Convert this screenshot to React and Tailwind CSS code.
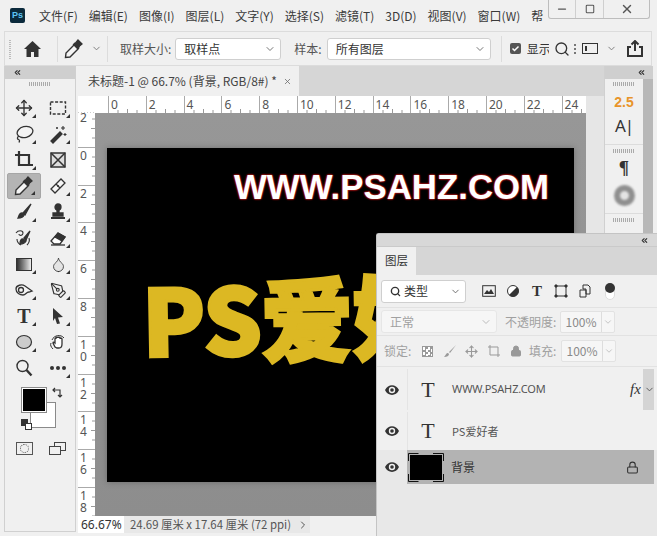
import React from 'react';
import { ChevronDown, ChevronsLeft, ChevronRight, Search, Move, Droplet, PenTool, Minus, Square, X, Lock } from 'lucide-react';

const cjk = "font-['Noto_Sans_CJK_SC','Noto_Sans',sans-serif]";

const menus = ['文件(F)', '编辑(E)', '图像(I)', '图层(L)', '文字(Y)', '选择(S)', '滤镜(T)', '3D(D)', '视图(V)', '窗口(W)'];
const rulerX = ['0', '2', '4', '6', '8', '10', '12', '14', '16', '18', '20', '22', '24'];
const rulerY = ['2', '0', '2', '4', '6', '8', '10', '12', '14', '16', '18'];

// small corner triangle on grouped tools
const Corner = () => (
  <span className="absolute right-[5px] bottom-[3px] w-0 h-0 border-l-[4px] border-l-transparent border-b-[4px] border-b-[#333]" />
);

const Svg = ({ children, s = 20 }) => (
  <svg width={s} height={s} viewBox="0 0 20 20" fill="none" stroke="#333" strokeWidth="1.3">{children}</svg>
);

const PipetteIcon = ({ s = 20 }) => (
  <Svg s={s}>
    <path d="M10.500 5.500l4 4-8.500 8.500-4.500 .5 .5-4.500z" fill="#f4f4f4" strokeWidth="1.400" />
    <path d="M9.500 5.500l1.500-1.500 1-.5 2-2.500 4 4-2.500 2-.5 1-1.500 1.500z" fill="#333" />
  </Svg>
);

const tools = [
  [<Move size={18} color="#333" strokeWidth={1.8} />, true],
  [<Svg><rect x="2.500" y="4" width="15" height="12" strokeDasharray="3 1.600" strokeWidth="1.400" /></Svg>, true],
  [<Svg><ellipse cx="11" cy="8" rx="8" ry="5.500" transform="rotate(-15 11 8)" fill="#f4f4f4" /><path d="M5 12c-2 1-2 3-.5 3.500s1 2 .5 3" /></Svg>, true],
  [<Svg><path d="M3 17l9-9 2 2-9 9z" fill="#333" /><path d="M15 2v4M13 4h4M17 9v3M15.500 10.500h3M9 3v2M8 4h2" strokeWidth="1.100" /></Svg>, true],
  [<Svg><path d="M1 5h14v11M5 1v14h14" strokeWidth="2.200" fill="none" /></Svg>, true],
  [<Svg><rect x="3" y="3" width="14" height="14" fill="#ddd" strokeWidth="1.500" /><path d="M3 3l14 14M17 3L3 17" strokeWidth="1.500" /></Svg>, false],
  [<PipetteIcon />, true],
  [<Svg><path d="M3 13L13 3l4 4L7 17z" fill="#f6f6f6" /><path d="M8 8l4 4" /><circle cx="10" cy="10" r="1" fill="#333" stroke="none" /></Svg>, true],
  [<Svg><path d="M17 2L9 11l2 2z" fill="#333" /><path d="M8 11c-3 0-3 3-4 5 2 0 5 0 6-3z" fill="#333" /></Svg>, true],
  [<Svg><circle cx="10" cy="5" r="3" fill="#333" /><path d="M9 7h2v4H9zM5 11h10v3H5z" fill="#333" /><path d="M3 16h14" strokeWidth="2" /></Svg>, true],
  [<Svg><path d="M2 5c2-3 7-3 7 0s-4 3-4 1M3 11c0 3 2 5 4 6M15 10c1 3 0 5-2 7" strokeWidth="1.100" /><path d="M16 3l-6 7 2 2z" fill="#333" /><path d="M9 11c-2 0-3 2-3 5 2 0 5-1 6-3z" fill="#333" /></Svg>, false],
  [<Svg><path d="M3 13l7-8 7 4-5 7H6z" fill="#fff" /><path d="M10 5l7 4-3 4-7-4z" fill="#333" /><path d="M3 17h14" /></Svg>, true],
  [<span className="block w-[16px] h-[13px] border border-[#333] bg-gradient-to-r from-[#333] to-[#eee]" />, true],
  [<Droplet size={17} color="#333" strokeWidth={1.2} fill="#e4e4e4" />, true],
  [<Svg><path d="M2 9c0-4 6-5 9-3l7 5-3 1c-3 0-3 3-6 3s-7-2-7-6z" fill="#f4f4f4" /><circle cx="7" cy="10" r="2.500" /></Svg>, true],
  [<PenTool size={17} color="#333" strokeWidth={1.6} />, true],
  [<span className="font-['Liberation_Serif',serif] font-bold text-[20px] leading-none text-[#333]">T</span>, true],
  [<svg width="20" height="20" viewBox="0 0 20 20"><path d="M5 2l10 9-5 .5 2 6-3 .5-2-6-2 3z" fill="#333" /></svg>, true],
  [<Svg><ellipse cx="10" cy="10" rx="7.500" ry="6.500" fill="#ccc" strokeWidth="1.200" /></Svg>, true],
  [<Svg><path d="M4 8c2-5 9-6 12-2M5 17c-2-2-3-4-2-6" strokeWidth="1" /><path d="M7 15l-2-4c0-1 1-1 2 0V7c0-1 1-1 1 0V6c0-1 2-1 2 0 0-1 2-1 2 0v1c0-1 2-1 2 0v5c0 2-1 4-3 4H9z" fill="#fff" /></Svg>, true],
  [<Svg><circle cx="8.500" cy="8" r="5.500" strokeWidth="1.400" /><path d="M12.500 12l5 5.500" strokeWidth="2.400" /></Svg>, false],
  [<svg width="20" height="6" viewBox="0 0 20 6"><circle cx="4" cy="3" r="2" fill="#333" /><circle cx="10" cy="3" r="2" fill="#333" /><circle cx="16" cy="3" r="2" fill="#333" /></svg>, true],
];

const Handle = () => (
  <div className="h-[4px] w-[22px] mx-auto bg-[repeating-linear-gradient(90deg,#aaa_0,#aaa_1px,transparent_1px,transparent_2px)]" />
);

const Select = ({ label, className, muted }) => (
  <div className={`flex items-center justify-between pl-[8px] pr-[4px] rounded-[3px] border ${muted ? 'border-[#e6e6e6] bg-[#f6f6f6] text-[#a0a0a0]' : 'border-[#cfcfcf] bg-white text-[#333]'} ${className}`}>
    <span className="text-[12px]">{label}</span>
    <ChevronDown size={12} color={muted ? '#bbb' : '#777'} />
  </div>
);

const Percent = () => (
  <div className="flex h-[22px] w-[55px] rounded-[2px] border border-[#e2e2e2] bg-[#f6f6f6] text-[#8a8a8a]">
    <span className="w-[40px] text-center text-[12px] leading-[20px]">100%</span>
    <span className="flex-1 flex items-center justify-center border-l border-[#ddd]"><ChevronDown size={10} color="#bbb" /></span>
  </div>
);

const EyeCell = () => (
  <div className="w-[30px] flex items-center justify-center">
    <svg width="14" height="10" viewBox="0 0 14 10">
      <path d="M0 5c3-6.500 11-6.500 14 0-3 6.500-11 6.500-14 0z" fill="#333" />
      <circle cx="7" cy="5" r="3.200" fill="#f0f0f0" />
      <circle cx="7" cy="5" r="1.800" fill="#333" />
    </svg>
  </div>
);

const SerifT = () => (
  <span className="w-[40px] text-center font-['Liberation_Serif',serif] text-[22px] leading-none text-[#333]">T</span>
);

export default function App() {
  return (
    <div className={`relative w-[657px] h-[536px] overflow-hidden bg-[#f0f0f0] ${cjk} text-[#333]`}>
      {/* title / menu bar */}
      <div className="flex h-[31px] items-start">
        <div className="ml-[10px] mt-[8px] w-[15px] h-[15px] rounded-[2px] bg-[#0b2a3c] text-[#5cc4f5] text-[9px] font-bold leading-[15px] text-center font-['Liberation_Sans',sans-serif]">Ps</div>
        <div className="ml-[14px] mt-[7px] flex gap-[11px] text-[12px] leading-[18px] text-[#3a3a3a] whitespace-nowrap">
          {menus.map((m) => <span key={m}>{m}</span>)}
          <span>帮</span>
        </div>
        <div className="ml-auto mr-[7px] shrink-0 flex h-[19px] w-[102px] rounded-b-[3px] border border-t-0 border-[#bdbdbd]">
          <span className="w-[27px] flex items-center justify-center border-r border-[#cfcfcf]"><Minus size={12} color="#555" strokeWidth={2.500} /></span>
          <span className="w-[28px] flex items-center justify-center border-r border-[#cfcfcf]"><Square size={10} color="#555" strokeWidth={2.500} /></span>
          <span className="flex-1 flex items-center justify-center"><X size={14} color="#555" strokeWidth={2.500} /></span>
        </div>
      </div>

      {/* options bar */}
      <div className="ml-[4px] mr-[5px] h-[35px] flex items-center border border-[#dcdcdc] bg-[#f0f0f0]">
        <div className="ml-[4px] w-[2px] h-[20px] bg-[repeating-linear-gradient(0deg,#bbb_0,#bbb_1px,transparent_1px,transparent_2px)]" />
        <svg width="17" height="16" viewBox="0 0 17 16" className="ml-[13px]"><path d="M8.500 0L0 8h2.500v8h4.500v-5h3v5h4.500V8H17z" fill="#333" /></svg>
        <div className="ml-[16px] w-px h-[26px] bg-[#dcdcdc]" />
        <span className="ml-[6px]"><PipetteIcon s={20} /></span>
        <ChevronDown size={11} color="#777" className="ml-[7px]" />
        <div className="ml-[5px] w-px h-[26px] bg-[#dcdcdc]" />
        <span className="ml-[12px] text-[12px] text-[#555]">取样大小:</span>
        <Select label="取样点" className="ml-[4px] w-[106px] h-[22px]" />
        <span className="ml-[13px] text-[12px] text-[#555]">样本:</span>
        <Select label="所有图层" className="ml-[5px] w-[164px] h-[22px]" />
        <div className="ml-[10px] w-px h-[26px] bg-[#dcdcdc]" />
        <span className="ml-[8px] w-[11px] h-[11px] rounded-[2px] bg-[#555] flex items-center justify-center">
          <svg width="9" height="9" viewBox="0 0 9 9"><path d="M1.500 4.500l2 2 4-4" stroke="#fff" strokeWidth="1.500" fill="none" /></svg>
        </span>
        <span className="ml-[6px] text-[12px] w-[22px] overflow-hidden whitespace-nowrap text-[#333]">显示</span>
        <Search size={16} color="#333" strokeWidth={2} className="ml-[5px]" />
        <span className="ml-[4px] w-[2px] h-[10px] bg-[repeating-linear-gradient(0deg,#777_0,#777_2px,transparent_2px,transparent_4px)]" />
        <span className="ml-[6px] w-[16px] h-[11px] border border-[#333] flex items-center pl-[2px]"><span className="w-[2px] h-[5px] bg-[#333]" /></span>
        <ChevronDown size={11} color="#777" className="ml-[8px]" />
        <svg width="18" height="18" viewBox="0 0 18 18" className="ml-[9px]"><path d="M9 1v10M5.500 4.500L9 1l3.500 3.500M5 7H2v9h14V7h-3" stroke="#333" strokeWidth="2" fill="none" /></svg>
      </div>

      {/* work area */}
      <div className="flex h-[467px]">
        {/* tools */}
        <div className="ml-[4px] w-[72px] h-[466px] border-x border-b border-[#d0d0d0] bg-[#f0f0f0]">
          <div className="h-[13px] bg-[#cfcfcf] flex items-center pl-[8px]"><ChevronsLeft size={9} color="#333" strokeWidth={3} /></div>
          <div className="mt-[3px]"><Handle /></div>
          <div className="mt-[9px] ml-[2px] grid grid-cols-[34px_34px] auto-rows-[26px]">
            {tools.map(([icon, corner], i) => (
              <div key={i} className={`relative flex items-center justify-center rounded-[2px] ${i === 6 ? 'bg-[#b4b4b4] border border-[#a6a6a6]' : ''}`}>
                {icon}
                {corner && <Corner />}
              </div>
            ))}
          </div>
          {/* colours */}
          <div className="relative h-[52px] ml-[16px] mt-[6px]">
            <div className="absolute left-[9px] top-[15px] w-[26px] h-[26px] bg-white border border-[#8a8a8a]" />
            <div className="absolute left-0 top-0 w-[26px] h-[26px] bg-black border border-[#8a8a8a] outline outline-1 outline-white -outline-offset-2" />
            <svg className="absolute left-[31px] top-0" width="12" height="12" viewBox="0 0 12 12"><path d="M1 3h7v7M3 1L1 3l2 2M6 8l2 2 2-2" stroke="#333" strokeWidth="1.200" fill="none" /></svg>
            <span className="absolute left-0 top-[32px] w-[7px] h-[7px] bg-[#333]" />
            <span className="absolute left-[4px] top-[36px] w-[7px] h-[7px] bg-white border border-[#333]" />
          </div>
          <div className="ml-[11px] mt-[3px] flex items-center gap-[16px]">
            <span className="w-[17px] h-[13px] border border-[#555] flex items-center justify-center"><span className="w-[9px] h-[9px] rounded-full border border-dotted border-[#555]" /></span>
            <span className="relative w-[17px] h-[13px]">
              <span className="absolute right-0 top-0 w-[12px] h-[9px] border border-[#444]" />
              <span className="absolute left-0 bottom-0 w-[12px] h-[9px] border border-[#444] bg-[#f0f0f0]" />
            </span>
          </div>
        </div>

        {/* document */}
        <div className="ml-[2px] w-[526px] flex flex-col bg-[#e6e6e6]">
          <div className="h-[30px] bg-[#d6d6d6] shrink-0">
            <div className="w-[221px] h-[30px] bg-[#f0f0f0] flex items-center pl-[10px] gap-[6px] text-[12px] text-[#444] whitespace-nowrap">
              <span>未标题-1 @ 66.7% (背景, RGB/8#) *</span>
              <X size={9} color="#666" />
            </div>
          </div>
          <div className="flex h-[17px] shrink-0 w-[508px] bg-white text-[12px] text-[#555] font-['Noto_Sans',sans-serif] leading-[17px] overflow-hidden">
            <div className="w-[17px] shrink-0 bg-[repeating-linear-gradient(90deg,#ccc_0,#ccc_1px,transparent_1px,transparent_3px)] bg-[length:100%_1px] bg-no-repeat bg-bottom" />
            <div className="w-[13px] shrink-0" />
            {rulerX.map((n) => (
              <div key={n} className="relative w-[37.8px] shrink-0 border-l border-[#aaa] pl-[2px]">
                {n}
                <svg className="absolute left-0 bottom-0" width="38" height="4"><path d="M9 1v3M18.500 0v4M28 1v3" stroke="#999" /></svg>
              </div>
            ))}
          </div>
          <div className="flex flex-1 min-h-0 w-[508px]">
            <div className="w-[17px] shrink-0 bg-white overflow-hidden text-[12px] leading-[12px] text-[#555] font-['Noto_Sans',sans-serif]">
              <div className="mt-[-4px]">
                {rulerY.map((n, i) => (
                  <div key={i} className="relative h-[37.8px] border-t border-[#aaa] pl-[2px] pt-[2px]">
                    {n.split('').map((d, j) => <div key={j}>{d}</div>)}
                    <svg className="absolute right-0 top-0" width="5" height="38"><path d="M2 9h3M1 18.500h4M2 28h3" stroke="#999" /></svg>
                  </div>
                ))}
              </div>
            </div>
            <div className="flex-1 bg-gradient-to-b from-[#979797] to-[#8d8d8d] flex items-center justify-center">
              <div className="w-[467px] h-[334px] bg-black overflow-hidden pt-[20px] shadow-[0_0_6px_rgba(0,0,0,0.25)]">
                <div className="pl-[127px] font-['Liberation_Sans',sans-serif] font-bold text-[34.800px] leading-[38px] text-white whitespace-nowrap [text-shadow:0_0_2px_#b01515,0_0_2px_#b01515,0_0_2px_#b01515,0_0_1px_#b01515]">WWW.PSAHZ.COM</div>
                <div className="ml-[35px] mt-[56px] w-[235px] overflow-hidden font-black text-[#dcb823] text-[92px] leading-[110px] whitespace-nowrap [-webkit-text-stroke:3px_#dcb823]">
                  <div className="-rotate-1 origin-left"><span className="tracking-[-1px]">PS</span>爱好</div>
                </div>
              </div>
            </div>
          </div>
          <div className="h-[17px] shrink-0 flex items-center leading-[17px] text-[#555] bg-[#f0f0f0] whitespace-nowrap">
            <span className="w-[46px] bg-white text-[#333] pl-[3px] text-[12px] font-['Noto_Sans',sans-serif]">66.67%</span>
            <span className="flex items-center bg-[#e8e8e8] pl-[6px] w-[186px] text-[11.400px]">24.69 厘米 x 17.64 厘米 (72 ppi)<ChevronRight size={12} color="#555" className="ml-[6px]" /></span>
          </div>
        </div>

        {/* collapsed panels */}
        <div className="w-[49px] border-l border-[#d0d0d0] flex flex-col">
          <div className="h-[13px] shrink-0 bg-[#cfcfcf] flex items-center justify-end pr-[7px]"><ChevronsLeft size={9} color="#333" strokeWidth={3} /></div>
          <div className="flex flex-1">
            <div className="w-[38px] flex flex-col items-stretch">
              <div className="mt-[3px]"><Handle /></div>
              <div className="text-center text-[14px] font-bold text-[#e8942a] leading-[17px] mt-[8px] font-['Liberation_Sans',sans-serif]">2.5</div>
              <div className="text-center text-[17px] leading-[22px] mt-[4px] tracking-[-1px] font-['Noto_Sans',sans-serif] text-[#333]">A|</div>
              <div className="mt-[7px] border-t border-[#dcdcdc] pt-[4px]"><Handle /></div>
              <div className="text-center text-[19px] font-bold leading-[20px] mt-[5px] font-['Liberation_Serif',serif] text-[#333]">¶</div>
              <div className="mt-[7px] mx-auto w-[21px] h-[21px] rounded-full border-[6px] border-[#8f8f8f] bg-[#e4e4e4] blur-[1px]" />
              <div className="mt-[7px] border-t border-[#dcdcdc] pt-[4px]"><Handle /></div>
            </div>
            <div className="w-[10px] bg-[#b8b8b8]" />
          </div>
        </div>
      </div>

      {/* layers panel floats over the document */}
      <div className="absolute left-[376px] top-[233px] w-[281px] h-[303px] bg-[#f0f0f0] border-l border-t border-[#c4c4c4] rounded-tl-[3px]">
        <div className="h-[13px] bg-[#d8d8d8] border-b border-[#cacaca] flex items-center justify-end pr-[8px]"><ChevronsLeft size={9} color="#333" strokeWidth={3} /></div>
        <div className="h-[28px] bg-[#d6d6d6] flex">
          <div className="w-[39px] bg-[#f0f0f0] text-[11.500px] leading-[27px] text-center text-[#333]">图层</div>
        </div>
        <div className="h-[33px] flex items-center border-b border-[#e2e2e2]">
          <div className="ml-[4px] w-[85px] h-[23px] flex items-center justify-between pl-[8px] pr-[4px] bg-white border border-[#cfcfcf] rounded-[3px] text-[12px]">
            <span className="flex items-center gap-[3px]"><Search size={11} strokeWidth={3} color="#333" />类型</span>
            <ChevronDown size={11} color="#666" />
          </div>
          <svg width="14" height="12" viewBox="0 0 14 12" className="ml-[16px]"><rect x=".7" y=".7" width="12.600" height="10.600" stroke="#333" fill="none" /><path d="M2 9l3-4 2 2 2-3 3 5z" fill="#333" /></svg>
          <svg width="14" height="14" viewBox="0 0 14 14" className="ml-[10px]"><circle cx="7" cy="7" r="5.500" fill="#fff" stroke="#333" /><path d="M11 3a5.500 5.500 0 01-8 8z" fill="#333" /></svg>
          <span className="ml-[11px] w-[12px] text-center font-['Liberation_Serif',serif] font-bold text-[15px] leading-none">T</span>
          <svg width="14" height="14" viewBox="0 0 14 14" className="ml-[11px]"><rect x="2" y="2" width="10" height="10" stroke="#333" fill="none" /><path d="M1 1h2v2H1zM11 1h2v2h-2zM1 11h2v2H1zM11 11h2v2h-2z" fill="#333" stroke="#333" /></svg>
          <svg width="14" height="14" viewBox="0 0 14 14" className="ml-[10px]"><path d="M5 1h5l2 2v7H8V5H5zM2 6h6v7H2z" stroke="#333" fill="none" /></svg>
          <span className="ml-[13px] relative w-[10px] h-[17px] rounded-full bg-white border border-[#ddd]"><span className="absolute left-[-1px] top-[-1px] w-[10px] h-[10px] rounded-full bg-[#333]" /></span>
        </div>
        <div className="h-[28px] flex items-center border-b border-[#e2e2e2]">
          <Select label="正常" muted className="ml-[4px] w-[116px] h-[23px]" />
          <span className="ml-[8px] w-[54px] text-[12px] text-[#a0a0a0] whitespace-nowrap">不透明度:</span>
          <span className="ml-[1px]"><Percent /></span>
        </div>
        <div className="h-[31px] flex items-center border-b border-[#e2e2e2] text-[#a0a0a0]">
          <span className="ml-[7px] w-[30px] text-[12px] whitespace-nowrap">锁定:</span>
          <span className="ml-[8px] w-[11px] h-[11px] border border-[#999] bg-[conic-gradient(#999_25%,#fff_0_50%,#999_0_75%,#fff_0)] bg-[length:5px_5px]" />
          <svg width="14" height="14" viewBox="0 0 14 14" className="ml-[10px]"><path d="M13 1L6 8l1 1zM5 9c-2 0-2 2-4 4 3 0 5-1 5-3z" fill="#999" /></svg>
          <Move size={13} color="#999" strokeWidth={2} className="ml-[8px]" />
          <svg width="14" height="14" viewBox="0 0 14 14" className="ml-[9px]"><path d="M3 1v10h10M1 3h10v10" stroke="#999" fill="none" /></svg>
          <Lock size={12} color="#999" fill="#999" className="ml-[9px]" />
          <span className="ml-[7px] w-[28px] text-[12px] whitespace-nowrap">填充:</span>
          <span className="ml-[4px]"><Percent /></span>
        </div>
        {/* layer rows */}
        <div className="mt-[2px] flex h-[41px] items-center">
          <EyeCell />
          <div className="relative flex-1 h-full flex items-center border-l border-[#e4e4e4]">
            <SerifT />
            <span className="ml-[4px] text-[11px] tracking-[-0.1px] text-[#555] font-['Noto_Sans',sans-serif]">WWW.PSAHZ.COM</span>
            <span className="absolute left-[222px] font-['Liberation_Serif',serif] italic text-[15px]">fx</span>
            <span className="absolute right-[3px] top-0 w-[11px] h-full bg-[#d4d4d4]" />
            <ChevronDown size={11} color="#555" className="absolute right-[2px]" />
          </div>
        </div>
        <div className="mt-[2px] flex h-[38px] items-center">
          <EyeCell />
          <div className="flex-1 h-full flex items-center border-l border-[#e4e4e4]">
            <SerifT />
            <span className="ml-[4px] text-[11px] text-[#555]">PS爱好者</span>
          </div>
        </div>
        <div className="flex h-[34px] items-center bg-[#e8e8e8]">
          <EyeCell />
          <div className="flex-1 mr-[3px] h-full flex items-center bg-[#b3b3b3] pr-[15px]">
            {/* thumbnail with the selected corner brackets */}
            <span className="relative ml-[1px] w-[36px] h-[29px] flex items-center justify-center">
              <span className="w-[32px] h-[25px] bg-black" />
              <svg className="absolute inset-0" width="36" height="29" viewBox="0 0 36 29"><path d="M.5 8V.5h10M25 .5h10.500V8M35.500 21v7.500H25M10.500 28.500H.5V21" stroke="#111" fill="none" /></svg>
            </span>
            <span className="ml-[7px] text-[12px] text-[#333]">背景</span>
            <Lock size={13} color="#333" className="ml-auto" />
          </div>
        </div>
        <div className="h-[60px] bg-[#e8e8e8]" />
      </div>
    </div>
  );
}
